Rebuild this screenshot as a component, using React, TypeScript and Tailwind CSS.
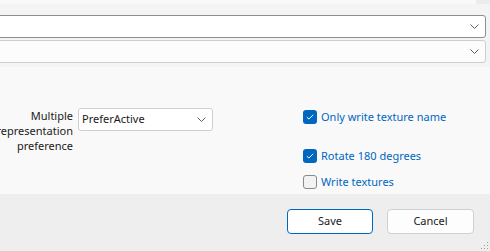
import React from 'react';

const font = { fontFamily: '"Noto Sans", "Open Sans", sans-serif' };

function Chevron() {
  return (
    <svg width="9" height="5" viewBox="0 0 9 5" fill="none" aria-hidden="true">
      <path d="M0.5 0.5 L4.5 4.5 L8.5 0.5" stroke="#606060" strokeWidth="1" />
    </svg>
  );
}

function Check({ checked, label }: { checked: boolean; label: string }) {
  return (
    <div className="flex items-center gap-[4px]">
      {checked ? (
        <span className="flex h-[14px] w-[14px] items-center justify-center rounded-[3px] bg-[#0067c0]">
          <svg width="8" height="6" viewBox="0 0 8 6" fill="none" aria-hidden="true">
            <path d="M0.8 3.2 L2.9 5 L7.2 0.8" stroke="#ffffff" strokeWidth="1" />
          </svg>
        </span>
      ) : (
        <span className="h-[14px] w-[14px] rounded-[3px] border border-[#8a8a8a] bg-[#f3f3f3]" />
      )}
      <span className="text-[11px] leading-[15px] text-[#0067c0]">{label}</span>
    </div>
  );
}

export default function App() {
  return (
    <div style={font} className="relative flex h-[251px] w-[490px] flex-col overflow-hidden bg-[#f9f9f9] text-[#1a1a1a]">
      <div className="flex h-[4px] justify-end">
        <div className="w-[14px] bg-[#ececec]" />
      </div>

      {/* top comboboxes */}
      <div className="flex flex-col gap-[2px] bg-[#f4f4f4] pb-[4px] pt-[11px]">
        <div className="-ml-[4px] mr-[4px] flex h-[23px] items-center justify-end rounded-[3px] border border-[#8d8d8d] bg-white pr-[6px]">
          <Chevron />
        </div>
        <div className="-ml-[4px] mr-[4px] flex h-[23px] items-center justify-end rounded-[3px] border border-[#cdcdcd] bg-[#fcfcfc] pr-[6px]">
          <Chevron />
        </div>
      </div>

      {/* options */}
      <div className="flex h-[127px] pt-[41px]">
        <div className="flex w-[303px] items-start">
          <div className="flex w-[73px] flex-col items-end text-[11px] leading-[15px] whitespace-nowrap">
            <span>Multiple</span>
            <span>representation</span>
            <span>preference</span>
          </div>
          <div className="ml-[5px] flex h-[23px] w-[135px] items-center justify-between rounded-[3px] border border-[#cfcfcf] bg-white pl-[3px] pr-[6px] text-[11px]">
            <span>PreferActive</span>
            <Chevron />
          </div>
        </div>
        <div className="flex flex-col pt-[1px]">
          <Check checked label="Only write texture name" />
          <div className="mt-[24px]">
            <Check checked label="Rotate 180 degrees" />
          </div>
          <div className="mt-[11px]">
            <Check checked={false} label="Write textures" />
          </div>
        </div>
      </div>

      {/* footer */}
      <div className="flex flex-1 items-start justify-end gap-[14px] bg-[#eeeeee] pr-[16px] pt-[15px]">
        <button className="h-[25px] w-[86px] rounded-[4px] border border-[#0067c0] bg-white text-[11px]">Save</button>
        <button className="h-[25px] w-[87px] rounded-[4px] border border-[#d0d0d0] bg-[#fdfdfd] text-[11px]">Cancel</button>
      </div>

      <svg className="absolute bottom-[1px] right-[1px]" width="8" height="8" viewBox="0 0 8 8" aria-hidden="true">
        <rect x="6" y="0" width="1" height="1" fill="#a0a0a0" />
        <rect x="3" y="3" width="1" height="1" fill="#a0a0a0" />
        <rect x="6" y="3" width="1" height="1" fill="#a0a0a0" />
        <rect x="0" y="6" width="1" height="1" fill="#a0a0a0" />
        <rect x="3" y="6" width="1" height="1" fill="#a0a0a0" />
        <rect x="6" y="6" width="1" height="1" fill="#a0a0a0" />
      </svg>
    </div>
  );
}
